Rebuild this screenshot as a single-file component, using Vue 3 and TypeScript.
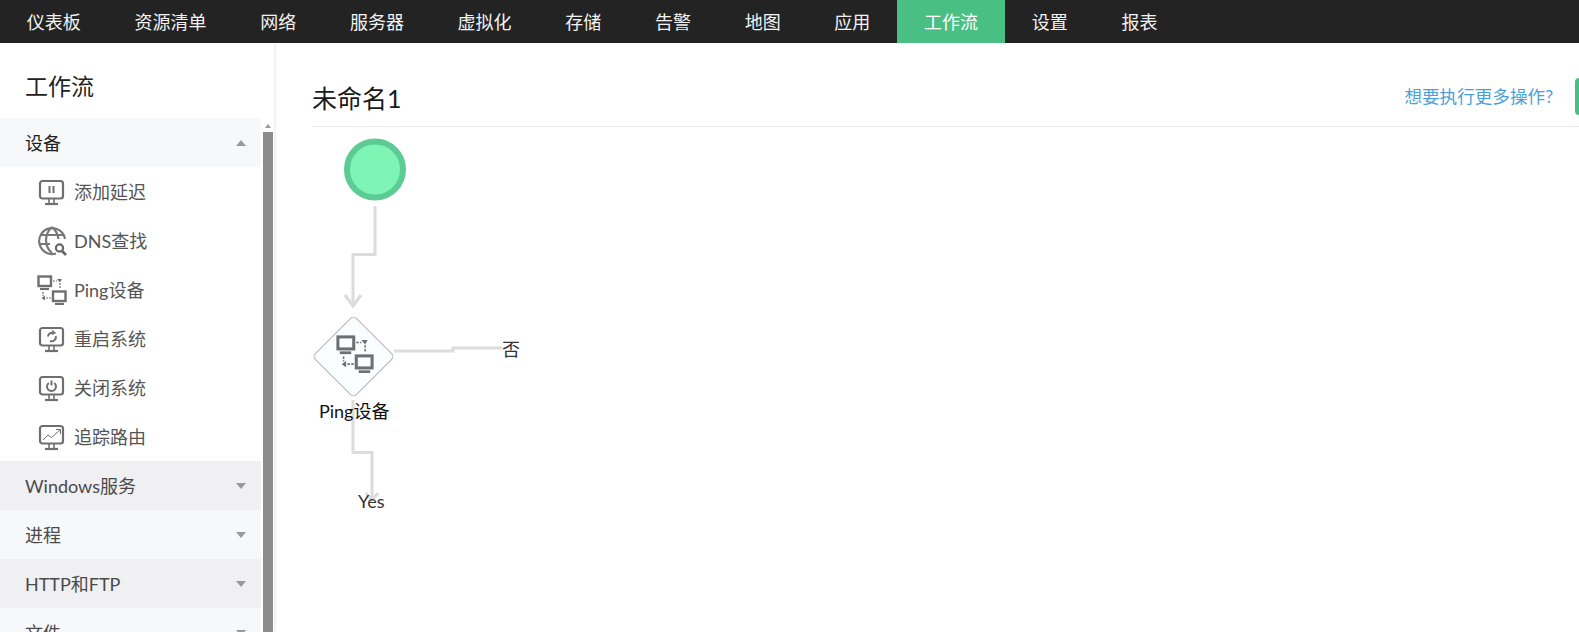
<template>
  <div class="page">
    <svg width="0" height="0" class="defs">
      <symbol id="screen" viewBox="0 0 30 30">
        <rect x="3" y="4" width="23" height="17.5" rx="2.5" fill="none" stroke="#6f6f6f" stroke-width="2.2" />
        <path d="M12 22v4M17 22v4" fill="none" stroke="#6f6f6f" stroke-width="1.6" />
        <path d="M8 27h13" fill="none" stroke="#6f6f6f" stroke-width="2.2" />
      </symbol>
      <symbol id="ping" viewBox="0 0 30 30">
        <rect x="1.500" y="1.500" width="12.500" height="9.500" fill="none" stroke="#6f6f6f" stroke-width="2.400" />
        <path d="M3 14h9" stroke="#6f6f6f" stroke-width="2.200" />
        <rect x="16" y="16.500" width="12.500" height="9.500" fill="none" stroke="#6f6f6f" stroke-width="2.400" />
        <path d="M18 29h9" stroke="#6f6f6f" stroke-width="2.200" />
        <path d="M16 6h4M23 8v6M6 17v4M9 23h5" fill="none" stroke="#6f6f6f" stroke-width="1.200" stroke-dasharray="2 1" />
        <path d="M20 4l5 0-2 3.500zM8 20.500v5l-3.500-2.500z" fill="#6f6f6f" />
      </symbol>
    </svg>

    <nav class="topbar">
      <a v-for="tab in tabs" :key="tab" class="tab" :class="{ active: tab === '工作流' }">{{ tab }}</a>
    </nav>

    <div class="body">
      <aside class="sidebar">
        <h2 class="side-title">工作流</h2>
        <div class="side-scroll">
          <div class="side-list">
            <div class="group open">
              <span class="label">设备</span>
              <i class="caret up"></i>
            </div>
            <div v-for="item in deviceItems" :key="item.label" class="item">
              <svg v-if="item.icon === 'dns'" class="item-icon" viewBox="0 0 30 30">
                <g fill="none" stroke="#777" stroke-width="2.200">
                  <path d="M19 27.500A13 13 0 1 1 28 13" />
                  <path d="M15 1c-8 7-8 19 0 26M15 1c4 3.500 6 7.500 6.500 12" />
                  <path d="M3 9h24M2 18h11" />
                  <circle cx="22.500" cy="22" r="3.600" stroke="#666" />
                  <path d="M25 25l4 4" stroke="#666" stroke-width="2.600" />
                </g>
              </svg>
              <svg v-else-if="item.icon === 'ping'" class="item-icon"><use href="#ping" /></svg>
              <svg v-else class="item-icon" viewBox="0 0 30 30">
                <use href="#screen" width="30" height="30" />
                <path v-if="item.icon === 'pause'" d="M12.500 9v7M16.500 9v7" stroke="#6f6f6f" stroke-width="2" fill="none" />
                <g v-if="item.icon === 'restart'" fill="none" stroke="#6f6f6f" stroke-width="2">
                  <path d="M11 12.500a4 4 0 0 1 5.500-3.500M18.800 12a4.300 4.300 0 0 1-5.800 5" />
                  <path d="M15 6.500l3 2.300-3 1.700" stroke-width="1.400" />
                </g>
                <g v-if="item.icon === 'power'" fill="none" stroke="#6f6f6f" stroke-width="2">
                  <path d="M11.800 10a4.500 4.500 0 1 0 5.400 0M14.500 7.500v5" />
                </g>
                <path v-if="item.icon === 'trace'" d="M6 18l5-5 3.500 2.500L23 8M19 7.500h4.500V12" fill="none" stroke="#6f6f6f" stroke-width="1" />
              </svg>
              <span class="label">{{ item.label }}</span>
            </div>
            <div v-for="(g, i) in otherGroups" :key="g" class="group" :class="{ dark: i % 2 === 0 }">
              <span class="label">{{ g }}</span>
              <i class="caret"></i>
            </div>
          </div>
          <div class="scrollbar">
            <i class="scroll-up"></i>
            <div class="thumb"></div>
          </div>
        </div>
      </aside>

      <main class="main">
        <header class="head">
          <h1>未命名1</h1>
          <a class="more">想要执行更多操作?</a>
          <span class="green-btn"></span>
        </header>
        <div class="canvas">
          <svg class="wires" width="400" height="500" viewBox="0 0 400 500">
            <g fill="none" stroke="#dcdcdc" stroke-width="3">
              <path d="M101 79v48.500H79V176" />
              <path d="M71 168l8 11 8-11" />
              <path d="M120 224h59v-3h49" />
              <path d="M79 273v52.500h19V372" />
              <path d="M92 366l6 7 6-7" />
            </g>
            <circle cx="101" cy="42.500" r="28" fill="#7ff5b5" stroke="#5ccc94" stroke-width="6" />
            <rect x="50.500" y="200.500" width="58" height="58" rx="4" fill="#fbfefe" stroke="#b4b4b4"
              transform="rotate(45 79.500 229.500)" />
            <use href="#ping" x="62" y="208" width="38" height="38" />
          </svg>
          <span class="node-label ping-label">Ping设备</span>
          <span class="node-label no-label">否</span>
          <span class="node-label yes-label">Yes</span>
        </div>
      </main>
    </div>
  </div>
</template>

<script setup lang="ts">
const tabs = ["仪表板", "资源清单", "网络", "服务器", "虚拟化", "存储", "告警", "地图", "应用", "工作流", "设置", "报表"];

const deviceItems = [
  { label: "添加延迟", icon: "pause" },
  { label: "DNS查找", icon: "dns" },
  { label: "Ping设备", icon: "ping" },
  { label: "重启系统", icon: "restart" },
  { label: "关闭系统", icon: "power" },
  { label: "追踪路由", icon: "trace" },
];

const otherGroups = ["Windows服务", "进程", "HTTP和FTP", "文件"];
</script>

<style>
html,
body {
  margin: 0;
  overflow: hidden;
}
</style>

<style scoped>
.page {
  width: 1579px;
  height: 632px;
  overflow: hidden;
  display: flex;
  flex-direction: column;
  font-family: Lato, "Noto Sans CJK SC", sans-serif;
  background: #fff;
}

.defs {
  position: absolute;
}

.topbar {
  flex: none;
  height: 43px;
  display: flex;
  background: #232323;
}

.tab {
  padding: 0 26.850px;
  line-height: 45px;
  font-size: 18px;
  color: #f2f2f2;
}

.tab.active {
  background: #4abf83;
  color: #fff;
}

.body {
  flex: 1;
  min-height: 0;
  display: flex;
}

.sidebar {
  flex: none;
  width: 274px;
  display: flex;
  flex-direction: column;
  box-shadow: 1px 0 3px rgba(0, 0, 0, 0.1);
}

.side-title {
  margin: 0;
  height: 75px;
  padding-left: 25px;
  font-size: 23px;
  font-weight: 400;
  line-height: 87px;
  color: #222;
}

.side-scroll {
  flex: 1;
  min-height: 0;
  display: flex;
  overflow: hidden;
}

.side-list {
  width: 261px;
  flex: none;
}

.group {
  height: 49px;
  display: flex;
  align-items: center;
  justify-content: space-between;
  padding: 0 15px 0 25px;
  font-size: 18px;
  color: #4a4a4a;
  background: #f7f8fa;
}

.group.dark {
  background: #f0f0f2;
}

.group.open {
  color: #222;
}

.label {
  margin-bottom: 2px;
}

.caret {
  width: 0;
  height: 0;
  border-left: 5.500px solid transparent;
  border-right: 5.500px solid transparent;
  border-top: 6px solid #999;
}

.caret.up {
  border-top: 0;
  border-bottom: 6px solid #999;
}

.item {
  height: 49px;
  display: flex;
  align-items: center;
  gap: 7px;
  padding-left: 37px;
  font-size: 18px;
  color: #555;
}

.item-icon {
  flex: none;
  width: 30px;
  height: 30px;
}

.scrollbar {
  margin-left: 2px;
  width: 10px;
  display: flex;
  flex-direction: column;
  align-items: center;
}

.scroll-up {
  margin-top: 6px;
  width: 0;
  height: 0;
  border-left: 3.500px solid transparent;
  border-right: 3.500px solid transparent;
  border-bottom: 4px solid #999;
}

.thumb {
  margin-top: 4px;
  flex: 1;
  width: 100%;
  background: #8c8c8c;
}

.main {
  flex: 1;
  min-width: 0;
  padding-left: 38px;
  display: flex;
  flex-direction: column;
}

.head {
  flex: none;
  height: 84px;
  box-sizing: border-box;
  border-bottom: 1px solid #ececec;
  display: flex;
  align-items: flex-end;
  padding-bottom: 12px;
}

.head h1 {
  margin: 0 auto 0 0;
  font-size: 25px;
  font-weight: 400;
  line-height: 32px;
  color: #1a1a1a;
}

.more {
  font-size: 17.600px;
  line-height: 34px;
  color: #4a9fd8;
}

.green-btn {
  margin-left: 22px;
  width: 4px;
  height: 37px;
  margin-bottom: -1px;
  background: #4abf83;
  border-radius: 4px 0 0 4px;
}

.canvas {
  position: relative;
  flex: 1;
}

.wires {
  position: absolute;
  left: -38px;
  top: 0;
  overflow: visible;
}

.node-label {
  position: absolute;
  font-size: 18px;
  line-height: 22px;
  white-space: nowrap;
  color: #333;
}

.ping-label {
  left: 7px;
  top: 273px;
  color: #111;
}

.no-label {
  left: 190px;
  top: 211px;
}

.yes-label {
  left: 46px;
  top: 363px;
}
</style>
